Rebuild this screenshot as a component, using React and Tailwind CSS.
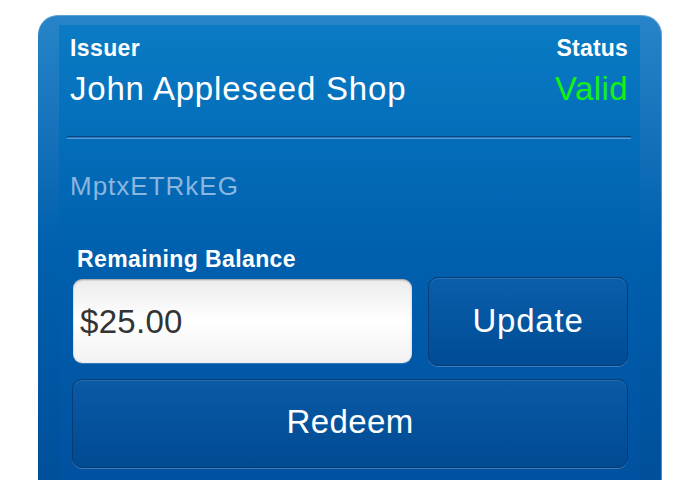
export default function App() {
  return (
    <main className="h-[480px] w-[700px] overflow-hidden bg-white font-['Liberation_Sans',Arial,sans-serif]">
      <div className="ml-[38px] mt-[15px] h-[465px] w-[624px] rounded-t-[20px] bg-gradient-to-b from-[#2784c8] via-[#0060ad] to-[#004f9a] pt-[10px] shadow-[inset_0_1px_0_rgba(255,255,255,0.25),inset_-1px_0_0_rgba(140,180,220,0.6)]">
        {/* inner panel */}
        <div className="ml-[21px] h-full w-[581px] bg-gradient-to-b from-[#0a7bc4] via-[#0060ae] to-[#0051a0] pl-[11px] pr-[12px] pt-[12px]">
          <div className="flex justify-between">
            <div className="flex flex-col">
              <span className="text-[23px] font-bold leading-none tracking-[0.4px] text-white">Issuer</span>
              <span className="mt-[12px] text-[33px] leading-none tracking-[0.8px] text-white">John Appleseed Shop</span>
            </div>
            <div className="flex flex-col items-end">
              <span className="text-[23px] font-bold leading-none tracking-[0.2px] text-white">Status</span>
              <span className="mt-[12px] text-[33px] leading-none tracking-[0.4px] text-[#14f214]">Valid</span>
            </div>
          </div>

          <div className="mt-[31px] h-[3px] border-t border-b border-t-[#0a4680] border-b-[#5a9ad6] bg-[#2c74b8] -ml-[3px] -mr-[3px]" />

          <div className="mt-[34px] text-[26px] leading-none tracking-[1px] text-[#8ab6df]">MptxETRkEG</div>

          <div className="ml-[7px] mt-[49px] text-[23px] font-bold leading-none tracking-[0.4px] text-white">Remaining Balance</div>

          <div className="mt-[6px] flex items-start gap-[16px]">
            <div className="ml-[3px] mt-[2px] flex h-[84px] w-[339px] items-center rounded-[9px] bg-gradient-to-b from-[#ececec] via-white to-[#f2f2f2] pl-[7px] shadow-[inset_0_1px_2px_rgba(0,0,0,0.35),0_1px_0_rgba(120,170,220,0.4)]">
              <span className="text-[33px] leading-none tracking-[0.3px] text-[#333333]">$25.00</span>
            </div>
            <button className="flex h-[89px] w-[200px] items-center justify-center rounded-[10px] border border-[#073b74] bg-gradient-to-b from-[#0b5eab] to-[#004c95] pb-[3px] text-[33px] leading-none tracking-[0.8px] text-white shadow-[0_1px_0_rgba(120,170,220,0.5),inset_0_1px_0_rgba(255,255,255,0.12)]">
              Update
            </button>
          </div>

          <button className="ml-[2px] mt-[13px] flex h-[89px] w-[556px] items-center justify-center rounded-[10px] border border-[#073b74] bg-gradient-to-b from-[#0b5aa6] to-[#004a92] pb-[4px] text-[33px] leading-none tracking-[0.4px] text-white shadow-[0_1px_0_rgba(120,170,220,0.5),inset_0_1px_0_rgba(255,255,255,0.12)]">
            Redeem
          </button>
        </div>
      </div>
    </main>
  );
}
